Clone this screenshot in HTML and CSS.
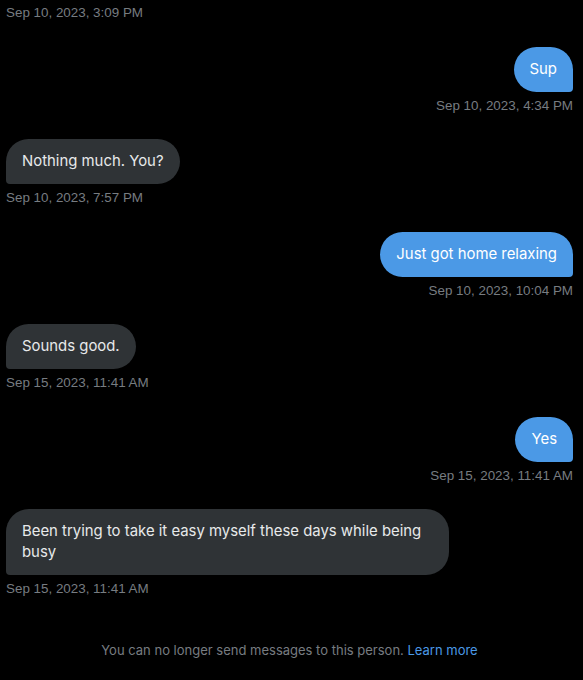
FILE: index.html
```html
<!DOCTYPE html>
<html>
<head>
<meta charset="utf-8">
<link rel="stylesheet" href="styles.css">
</head>
<body>
<div class="thread">
  <div class="ts">Sep 10, 2023, 3:09 PM</div>

  <div class="msg sent">
    <div class="bubble">Sup</div>
    <div class="ts">Sep 10, 2023, 4:34 PM</div>
  </div>

  <div class="msg recv">
    <div class="bubble">Nothing much. You?</div>
    <div class="ts">Sep 10, 2023, 7:57 PM</div>
  </div>

  <div class="msg sent">
    <div class="bubble">Just got home relaxing</div>
    <div class="ts">Sep 10, 2023, 10:04 PM</div>
  </div>

  <div class="msg recv">
    <div class="bubble">Sounds good.</div>
    <div class="ts">Sep 15, 2023, 11:41 AM</div>
  </div>

  <div class="msg sent">
    <div class="bubble">Yes</div>
    <div class="ts">Sep 15, 2023, 11:41 AM</div>
  </div>

  <div class="msg recv">
    <div class="bubble">Been trying to take it easy myself these days while being busy</div>
    <div class="ts">Sep 15, 2023, 11:41 AM</div>
  </div>

  <div class="notice">You can no longer send messages to this person. <a class="link" href="#">Learn more</a></div>
</div>
</body>
</html>
```

FILE: styles.css
```css
html, body {
  margin: 0;
  padding: 0;
  background: #000;
}
body {
  font-family: Inter, "Liberation Sans", sans-serif;
  color: #e7e9ea;
}
.thread {
  display: flex;
  flex-direction: column;
  padding: 3px 10px 0 6px;
  gap: 23.5px;
}
.ts {
  font-family: "Liberation Sans", Arial, sans-serif;
  font-size: 13.4px;
  line-height: 20px;
  color: #777c81;
}
.msg {
  display: flex;
  flex-direction: column;
  gap: 4px;
}
.msg.sent {
  align-items: flex-end;
}
.msg.recv {
  align-items: flex-start;
}
.bubble {
  font-size: 14.9px;
  line-height: 21px;
  padding: 12px 16px;
  border-radius: 23px;
  max-width: 443px;
  box-sizing: border-box;
}
.sent .bubble {
  background: #4b99e6;
  color: #fff;
  border-bottom-right-radius: 4px;
}
.recv .bubble {
  background: #2f3336;
  color: #e7e9ea;
  border-bottom-left-radius: 4px;
}
.notice {
  margin-top: 17px;
  text-align: center;
  font-size: 13px;
  line-height: 20px;
  color: #777c81;
}
.link {
  color: #4b99e6;
  text-decoration: none;
}
```
